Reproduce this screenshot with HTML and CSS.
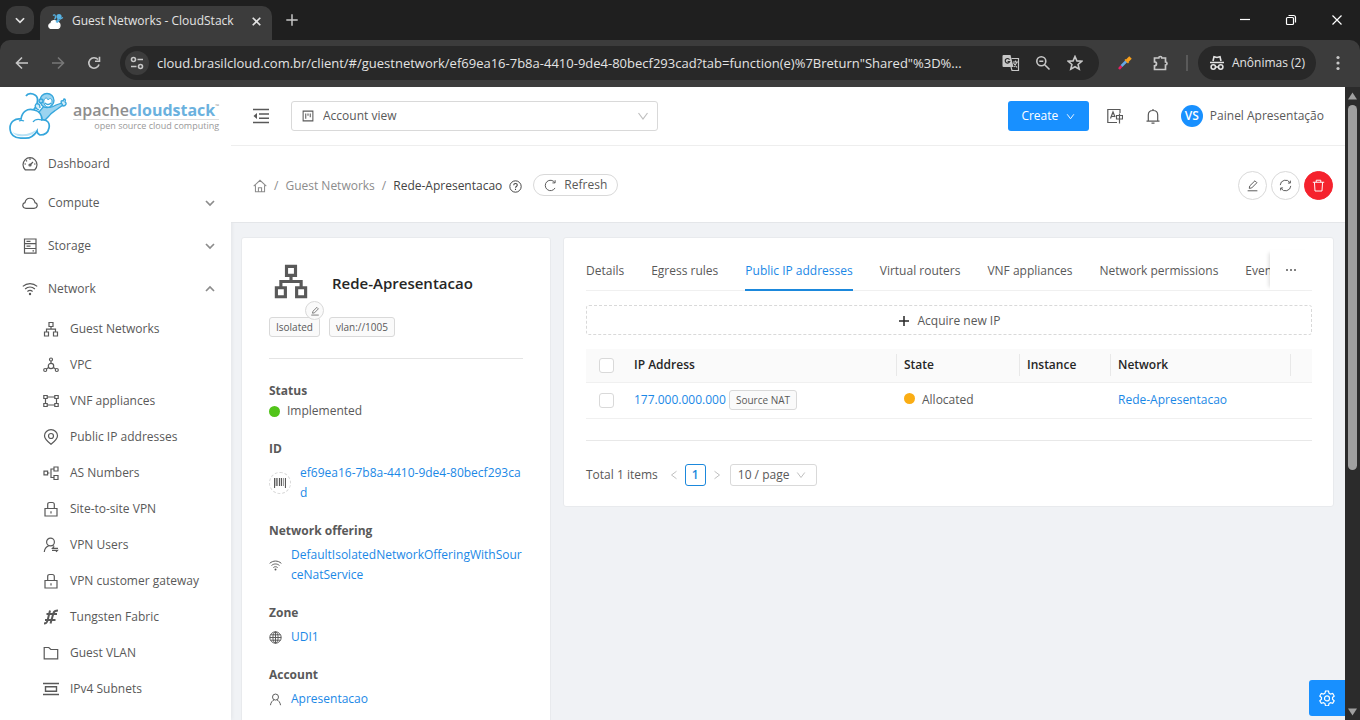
FILE: index.html
```html
<!DOCTYPE html>
<html lang="en">
<head>
    <meta charset="UTF-8">
    <meta name="viewport" content="width=device-width, initial-scale=1.0">
    <title>Guest Networks - CloudStack</title>
    <link rel="stylesheet" href="styles.css">
</head>
<body>
    <!-- shared icons -->
    <svg class="defs" aria-hidden="true">
        <symbol id="i-sitemap" viewBox="0 0 16 16"><path d="M6 1.500h4v4H6zM1.500 11h4v4h-4zM10.500 11h4v4h-4zM8 5.500v2.700M3.500 11V8.200h9V11"/></symbol>
        <symbol id="i-down" viewBox="0 0 12 12"><path d="M1.500 3L6 9l4.500-6"/></symbol>
        <symbol id="i-chev" viewBox="0 0 12 12"><path d="M2 4L6 8l4-4" stroke-width="1.700"/></symbol>
        <symbol id="i-edit" viewBox="0 0 16 16"><path d="M2 14.500h12M4 11.500l.6-3L11 2.200l2.400 2.400L7 11z"/></symbol>
        <symbol id="i-wifi" viewBox="0 0 16 16"><path d="M.8 5.400c4.200-3.800 10.200-3.800 14.400 0M3.100 8c2.900-2.500 6.900-2.500 9.800 0M5.400 10.500c1.600-1.300 3.600-1.300 5.200 0"/><circle cx="8" cy="13" r="1.200" fill="currentColor" stroke="none"/></symbol>
        <symbol id="i-lock" viewBox="0 0 16 16"><path d="M2 7.500h12v7.500H2zM4.700 7.500V3.500q0-2 2-2h2.600q2 0 2 2v4M8 10.200v2.300"/></symbol>
        <symbol id="i-user" viewBox="0 0 16 16"><circle cx="8" cy="5" r="3.700"/><path d="M1.800 15c.4-3.500 2.500-5.800 4.500-6.600M14.200 15c-.4-3.500-2.500-5.800-4.500-6.600"/></symbol>
    </svg>

    <div class="browser">
        <div class="tabstrip">
            <button class="tab-search" aria-label="Search tabs"><svg viewBox="0 0 12 12"><path d="M2.500 4.500L6 8l3.500-3.500" stroke-width="1.500"/></svg></button>
            <div class="tab">
                <svg class="favicon" viewBox="0 0 16 16">
                    <path d="M3.500 15.500C0 15.500 0 11 3 10.500c0-3.500 5-4 6-1 4-.5 4 6 0 6z" fill="#fff" stroke="#fff"/>
                    <path d="M7.500 9L10 5.500l2 2L9.500 10z" fill="#58b4e5" stroke="none"/>
                    <circle cx="11" cy="3.500" r="2.600" fill="#58b4e5" stroke="none"/>
                    <path d="M11.500 6.500l3.500-2M5 2.500c2-2 3.500 1 1.500 4" stroke="#58b4e5"/>
                </svg>
                <span>Guest Networks - CloudStack</span>
                <button class="tab-close" aria-label="Close tab"><svg viewBox="0 0 12 12"><path d="M2.500 2.500l7 7M9.500 2.500l-7 7" stroke-width="1.500"/></svg></button>
            </div>
            <button class="tab-new" aria-label="New tab"><svg viewBox="0 0 14 14"><path d="M7 2v10M2 7h10" stroke-width="1.300"/></svg></button>
            <div class="window-controls">
                <button aria-label="Minimize"><svg viewBox="0 0 12 12"><path d="M1 5.500h10"/></svg></button>
                <button aria-label="Restore"><svg viewBox="0 0 12 12"><rect x="1.500" y="3.500" width="7" height="7" rx="1"/><path d="M3.500 1.500h5q2 0 2 2v5"/></svg></button>
                <button aria-label="Close"><svg viewBox="0 0 12 12"><path d="M1.500 1.500l9 9M10.500 1.500l-9 9"/></svg></button>
            </div>
        </div>
        <div class="toolbar">
            <button aria-label="Back"><svg viewBox="0 0 16 16"><path d="M14 8H2.500M8 2.500L2.500 8 8 13.500"/></svg></button>
            <button class="off" aria-label="Forward"><svg viewBox="0 0 16 16"><path d="M2 8h11.500M8 2.500L13.500 8 8 13.500"/></svg></button>
            <button aria-label="Reload"><svg viewBox="0 0 16 16"><path d="M13 9.500A5.200 5.200 0 1 1 12 4.600M13.500 1.800v4.400H9"/></svg></button>
            <div class="omnibox">
                <button class="site-info" aria-label="Site information"><svg viewBox="0 0 16 16"><circle cx="4.500" cy="4.500" r="2"/><circle cx="11.500" cy="11.500" r="2"/><path d="M8.500 4.500H14M2 11.500h5.500"/></svg></button>
                <input class="url" type="text" aria-label="Address" value="cloud.brasilcloud.com.br/client/#/guestnetwork/ef69ea16-7b8a-4410-9de4-80becf293cad?tab=function(e)%7Breturn&quot;Shared&quot;%3D%...">
                <button aria-label="Translate"><svg class="gt" viewBox="0 0 18 18"><path d="M1.500 1h7l3 12h-10q-1 0-1-1V2q0-1 1-1z" fill="#c7c7c7" stroke="none"/><path d="M9.500 4.500h7v12H10l-1-3.500M11 8h5M13.500 6.500V8M12 13l3-5M11.500 9l3.500 4.500"/><path d="M7.500 5.600a2.300 2.300 0 1 0 .2 2H5.600" stroke="#282828"/></svg></button>
                <button aria-label="Zoom"><svg viewBox="0 0 16 16"><circle cx="6.300" cy="6.300" r="4.500"/><path d="M9.700 9.700L14.500 14.500M4.300 6.300h4"/></svg></button>
                <button aria-label="Bookmark"><svg viewBox="0 0 16 16"><path d="M8 1.500l1.900 4.400 4.800.4-3.600 3.200 1.100 4.700L8 11.700l-4.200 2.500 1.100-4.700L1.300 6.300l4.800-.4z"/></svg></button>
            </div>
            <button class="ext" aria-label="Color picker"><svg viewBox="0 0 16 16"><path d="M2 14l2.500-3" stroke="#e91e63" stroke-width="2.500"/><path d="M4.500 11l5-5" stroke="#64a8e8" stroke-width="2.500"/><path d="M8 4.500L11.500 8" stroke="#f9a01b" stroke-width="1.500"/><path d="M10 6l3.500-3.500" stroke="#f9a01b" stroke-width="3.500"/></svg></button>
            <button class="ext" aria-label="Extensions"><svg viewBox="0 0 16 16"><path d="M1.500 3h4.300a1.500 1.500 0 0 1 3 0h3.700v4a1.500 1.500 0 0 1 0 3v4.500h-11v-3.700a2 2 0 0 0 0-4z" stroke-width="1.700"/></svg></button>
            <span class="sep"></span>
            <button class="incognito"><svg viewBox="0 0 16 16"><path d="M4 6l1-4.200 3 .7 3-.7L12 6M1 7.500h14M6.500 12h3" stroke-width="1.600"/><circle cx="4.300" cy="12" r="2.200"/><circle cx="11.700" cy="12" r="2.200"/></svg>Anônimas (2)</button>
            <button aria-label="Menu"><svg viewBox="0 0 16 16"><g fill="currentColor" stroke="none"><circle cx="8" cy="2.500" r="1.600"/><circle cx="8" cy="8" r="1.600"/><circle cx="8" cy="13.500" r="1.600"/></g></svg></button>
        </div>
    </div>

    <div class="page">
        <aside class="sidebar">
            <div class="logo">
                <svg class="monkey" viewBox="0 0 58 48">
                    <g stroke="#35a6dc" stroke-width="1.300">
                        <path d="M23 20c5-5 8-14 3-17-3-2-7-2-9 1" stroke-width="1.800"/>
                        <path d="M30 20l5-6c4 2 9 1 12-1l6-2 1 2-7 5c-3 2-5 3-7 6l-6 6z" fill="#9bd4f0"/>
                        <path d="M30 18c-3-1-5-4-3-6 3-1 4 1 4 4" fill="#d3edf9"/>
                        <circle cx="38" cy="8.500" r="7" fill="#9bd4f0"/>
                        <circle cx="32" cy="9" r="2" fill="#9bd4f0"/>
                        <path d="M35 8c1-3 4-2 4 0 1-2 4-2 4 1 0 4-2 6-4 6s-5-3-4-7z" fill="#fff" stroke-width="1"/>
                        <path d="M36 11c2 2 4 2 6 0" />
                        <path d="M53 12c-2-3 0-4 1-3l1-2q2 0 1 3c2 1 1 4-2 4z" fill="#d3edf9"/>
                        <path d="M14 46C5 47 1 42 1 36s5-10 11-9c1-7 6-11 13-9 6 1 8 6 8 10 6-1 8 4 7 8-1 5-5 7-9 7-2-1-3-2-3-4-3 5-8 8-14 7z" fill="#fff" stroke-width="1.700"/>
                        <path d="M3 39c2 4 6 6 12 5 6 0 10-2 12-6-5 3-10 5-16 4-4 0-7-1-8-3z" fill="#b9e2f5" stroke="none"/>
                        <path d="M24 30c2-3 6-3 9-2M15 29c-2-1-3-1-5 0"/>
                    </g>
                </svg>
                <div class="wordmark">
                    <div class="brand">apache<b>cloudstack</b><small>™</small></div>
                    <div class="tagline">open source cloud computing</div>
                </div>
            </div>
            <ul class="menu">
                <li><a class="item" href="#"><svg viewBox="0 0 16 16"><path d="M3.200 13.800a7 7 0 1 1 9.600 0zM8 9l3-3M8 2.500V4M2.500 8H4M12 8h1.500M4 4.300l1 1"/><circle cx="8" cy="9" r="1"/></svg><span>Dashboard</span></a></li>
                <li class="group"><a class="item" href="#"><svg viewBox="0 0 16 16"><path d="M4 13.300C0 13.300-.2 8.500 3 7.700 4 1.800 11.800 1.700 13 7.700c3.200.8 3 5.600-1 5.600z"/></svg><span>Compute</span><svg class="arrow"><use href="#i-chev"/></svg></a></li>
                <li class="group"><a class="item" href="#"><svg viewBox="0 0 16 16"><path d="M2.500 1h11.500v14.200H2.500zM2.500 5.700H14M2.500 10.500H14M4.500 3.400h4M4.500 8.100h4M10.500 12.800h1.500"/></svg><span>Storage</span><svg class="arrow"><use href="#i-chev"/></svg></a></li>
                <li class="group open"><a class="item" href="#"><svg><use href="#i-wifi"/></svg><span>Network</span><svg class="arrow"><use href="#i-chev"/></svg></a>
                    <ul class="submenu">
                        <li><a class="item" href="#"><svg><use href="#i-sitemap"/></svg><span>Guest Networks</span></a></li>
                        <li><a class="item" href="#"><svg viewBox="0 0 16 16"><circle cx="8" cy="2.500" r="1.500"/><circle cx="8" cy="9" r="2.700"/><circle cx="2.200" cy="13" r="1.500"/><circle cx="13.800" cy="13" r="1.500"/><path d="M8 4v2.300M5.600 10.500l-2.200 1.600M10.400 10.500l2.200 1.600"/></svg><span>VPC</span></a></li>
                        <li><a class="item" href="#"><svg viewBox="0 0 16 16"><path d="M.8 2.500h3.400v3H.8zM11.800 2.500h3.400v3h-3.400zM.8 10.500h3.400v3H.8zM11.800 10.500h3.400v3h-3.400zM4.200 4h7.600M4.200 12h7.600M2.500 5.500v5M13.500 5.500v5"/></svg><span>VNF appliances</span></a></li>
                        <li><a class="item" href="#"><svg viewBox="0 0 16 16"><path d="M8 15.300C4.500 12.500 1.500 10 1.500 6.700a6.500 6 0 0 1 13 0c0 3.300-3 5.800-6.500 8.600z"/><circle cx="8" cy="7" r="2.500"/></svg><span>Public IP addresses</span></a></li>
                        <li><a class="item" href="#"><svg viewBox="0 0 16 16"><path d="M1 6.200h3.600v3.600H1zM11 2h4v4h-4zM11 10.500h4v4h-4zM11 4H8v8.500h3M4.600 8h1.800"/></svg><span>AS Numbers</span></a></li>
                        <li><a class="item" href="#"><svg><use href="#i-lock"/></svg><span>Site-to-site VPN</span></a></li>
                        <li><a class="item" href="#"><svg viewBox="0 0 16 16"><circle cx="7.500" cy="5" r="3.900"/><path d="M1.300 15c.2-3 2-5.400 4.500-6.300M9.500 8.500l1.800 1M15 11.300H9.500l1.500-1.600M9 13.300h5.500l-1.500 1.600"/></svg><span>VPN Users</span></a></li>
                        <li><a class="item" href="#"><svg><use href="#i-lock"/></svg><span>VPN customer gateway</span></a></li>
                        <li><a class="item" href="#"><svg viewBox="0 0 16 16"><path d="M1 14.500c2.500 0 3-.8 3.700-3.500L7 1.500M7.500 14.500l3-10.500c.5-1.700 1.800-2.500 4.500-2.500M3.500 5h10.500M2 11h10.500" stroke-width="2"/></svg><span>Tungsten Fabric</span></a></li>
                        <li><a class="item" href="#"><svg viewBox="0 0 16 16"><path d="M1.200 2.500h4.600l2 2h6.900v9.300H1.200z"/></svg><span>Guest VLAN</span></a></li>
                        <li><a class="item" href="#"><svg viewBox="0 0 16 16"><path d="M0 2.500h16M0 13.500h16M2.500 5.800h11v4.400h-11z" stroke-width="1.400"/></svg><span>IPv4 Subnets</span></a></li>
                    </ul>
                </li>
            </ul>
        </aside>

        <div class="main">
            <header class="header">
                <button class="fold" aria-label="Collapse menu"><svg viewBox="0 0 16 16"><path d="M0 1.500h16M6 6h10M6 10.200h10M0 14.500h16" stroke-width="1.400"/><path d="M4 5v6L.5 8z" fill="currentColor" stroke="none"/></svg></button>
                <div class="project-select">
                    <svg viewBox="0 0 16 16"><path d="M1.500 1.500h13v13h-13zM5 4.500v7M8 4.500v3M11 4.500v5" stroke-width="1.400"/></svg>
                    <select aria-label="Project"><option>Account view</option></select>
                    <svg class="caret"><use href="#i-down"/></svg>
                </div>
                <button class="btn-create">Create<svg><use href="#i-down"/></svg></button>
                <button class="icon-btn" aria-label="Language"><svg viewBox="0 0 16 16"><path d="M13 5V1.500H.8v13H10M3.500 10.500L6 4l2 5M4.500 8.500h3M9.500 7.500h6v3.500h-6zM12.500 5.500v10" stroke-width="1.200"/></svg></button>
                <button class="icon-btn bell" aria-label="Notifications"><svg viewBox="0 0 16 16"><path d="M1.500 13.200h13M3.300 13V7q0-4.500 4.700-4.500T12.700 7v6M8 1v1.500M6.500 15.200h3"/></svg></button>
                <a class="account" href="#"><span class="avatar">VS</span>Painel Apresentação</a>
            </header>

            <div class="crumb-bar">
                <nav class="crumbs">
                    <a href="#" aria-label="Home"><svg viewBox="0 0 16 16"><path d="M.8 8.200L8 1.500l7.200 6.700M2.800 7v7.500h10.400V7M6.200 14.500V10h3.600v4.500"/></svg></a>
                    <i>/</i><a href="#">Guest Networks</a><i>/</i><span class="current">Rede-Apresentacao</span>
                    <svg class="help" viewBox="0 0 16 16"><circle cx="8" cy="8" r="7"/><path d="M5.800 6.500c0-3 4.400-2.800 4.400-.2 0 1.700-2.200 1.600-2.200 3.200M8 10.700v1.500" stroke-width="1.300"/></svg>
                </nav>
                <button class="btn-refresh"><svg viewBox="0 0 16 16"><path d="M13.600 11A6.400 6.400 0 1 1 13.300 4.400M13.700 1.500v3.300h-3.300"/></svg>Refresh</button>
                <div class="actions">
                    <button aria-label="Edit"><svg><use href="#i-edit"/></svg></button>
                    <button aria-label="Restart"><svg viewBox="0 0 16 16"><path d="M1.500 7.500A6.500 6.500 0 0 1 13.500 4.500M14.500 8.500A6.500 6.500 0 0 1 2.500 11.500M14 2v3h-3M2 14v-3h3"/></svg></button>
                    <button class="danger" aria-label="Delete"><svg viewBox="0 0 16 16"><path d="M1 4h14M3 4l.7 10.800h8.600L13 4M5.200 4V1.500h5.600V4"/></svg></button>
                </div>
            </div>

            <div class="content">
                <section class="card info">
                    <div class="resource">
                        <div class="resource-icon">
                            <svg><use href="#i-sitemap"/></svg>
                            <button class="badge-edit" aria-label="Edit icon"><svg><use href="#i-edit"/></svg></button>
                        </div>
                        <h1>Rede-Apresentacao</h1>
                    </div>
                    <div class="tags"><span class="tag">Isolated</span><span class="tag">vlan://1005</span></div>
                    <dl>
                        <div class="status"><dt>Status</dt><dd><span class="dot green"></span>Implemented</dd></div>
                        <div><dt>ID</dt><dd><button class="barcode" aria-label="Copy ID"><svg viewBox="0 0 12 10"><path d="M.5 0v10M3 0v8M5.500 0v8M7.500 0v8M11.500 0v10" /><path d="M9.500 0v8M2 0v8" stroke-width=".6"/></svg></button><a href="#">ef69ea16-7b8a-4410-9de4-80becf293cad</a></dd></div>
                        <div><dt>Network offering</dt><dd><svg><use href="#i-wifi"/></svg><a href="#">DefaultIsolatedNetworkOfferingWithSourceNatService</a></dd></div>
                        <div><dt>Zone</dt><dd><svg viewBox="0 0 16 16"><circle cx="8" cy="8" r="7"/><ellipse cx="8" cy="8" rx="3.200" ry="7"/><path d="M8 1v14M1 8h14M2 4.700h12M2 11.300h12"/></svg><a href="#">UDI1</a></dd></div>
                        <div><dt>Account</dt><dd><svg><use href="#i-user"/></svg><a href="#">Apresentacao</a></dd></div>
                    </dl>
                </section>

                <section class="card detail">
                    <div class="tabs">
                        <div class="tab-list" role="tablist">
                            <button role="tab">Details</button>
                            <button role="tab">Egress rules</button>
                            <button role="tab" class="active" aria-selected="true">Public IP addresses</button>
                            <button role="tab">Virtual routers</button>
                            <button role="tab">VNF appliances</button>
                            <button role="tab">Network permissions</button>
                            <button role="tab">Events</button>
                        </div>
                        <button class="more" aria-label="More tabs"><svg viewBox="0 0 12 12"><g fill="currentColor" stroke="none"><circle cx="2" cy="6" r="1"/><circle cx="6" cy="6" r="1"/><circle cx="10" cy="6" r="1"/></g></svg></button>
                    </div>
                    <button class="btn-acquire"><svg viewBox="0 0 12 12"><path d="M6 1v10M1 6h10" stroke-width="1.500"/></svg>Acquire new IP</button>
                    <table>
                        <colgroup><col class="c-check"><col><col class="c-state"><col class="c-instance"><col class="c-network"><col class="c-end"></colgroup>
                        <thead>
                            <tr><th><input type="checkbox" aria-label="Select all"></th><th class="split">IP Address</th><th class="split">State</th><th class="split">Instance</th><th class="split">Network</th><th></th></tr>
                        </thead>
                        <tbody>
                            <tr><td><input type="checkbox" aria-label="Select 177.000.000.000"></td><td><a href="#">177.000.000.000</a> <span class="tag">Source NAT</span></td><td><span class="dot orange"></span>Allocated</td><td></td><td><a href="#">Rede-Apresentacao</a></td><td></td></tr>
                        </tbody>
                    </table>
                    <div class="pagination">
                        <span>Total 1 items</span>
                        <button class="prev" aria-label="Previous page"><svg><use href="#i-down"/></svg></button>
                        <button class="num">1</button>
                        <button class="next" aria-label="Next page"><svg><use href="#i-down"/></svg></button>
                        <div class="page-size"><select aria-label="Page size"><option>10 / page</option></select><svg><use href="#i-down"/></svg></div>
                    </div>
                </section>
            </div>
            <button class="settings" aria-label="Settings"><svg viewBox="0 0 16 16"><path d="M6.500 1h3l.5 2.200 1.500.9 2.200-.7 1.500 2.600-1.700 1.500v1.800l1.700 1.500-1.500 2.600-2.200-.7-1.500.9-.5 2.200h-3L6 13.600l-1.500-.9-2.200.7L.8 10.800l1.700-1.500V7.500L.8 6l1.500-2.600 2.200.7L6 3.200z" stroke-width="1.200"/><circle cx="8" cy="8.400" r="2.500" stroke-width="1.200"/></svg></button>
        </div>

        <div class="scrollbar">
            <svg viewBox="0 0 10 8"><path d="M5 0l5 8H0z"/></svg>
            <div class="track"><div class="thumb"></div></div>
            <svg viewBox="0 0 10 8"><path d="M0 0h10L5 8z"/></svg>
        </div>
    </div>
</body>
</html>
```
FILE: styles.css
```css
* {
    box-sizing: border-box;
}
body {
    display: flex;
    flex-direction: column;
    height: 100vh;
    margin: 0;
    overflow: hidden;
    background: #f0f2f5;
    color: #595959;
    font: 12px/20px "Open Sans", "Noto Sans", sans-serif;
}
button, input, select {
    margin: 0;
    padding: 0;
    border: 0;
    background: none;
    color: inherit;
    font: inherit;
}
button {
    display: flex;
    align-items: center;
    justify-content: center;
    cursor: pointer;
}
select {
    appearance: none;
    outline: none;
}
a {
    color: #1b88e6;
    text-decoration: none;
}
ul, dl, dd {
    margin: 0;
    padding: 0;
    list-style: none;
}
svg {
    flex: none;
    width: 16px;
    height: 16px;
    fill: none;
    stroke: currentColor;
    stroke-width: 1.2;
}
.defs {
    position: absolute;
    width: 0;
    height: 0;
}

/* browser window */
.browser {
    flex: none;
    background: #1f1f1f;
    color: #e3e3e3;
}
.tabstrip {
    display: flex;
    align-items: center;
    height: 40px;
    padding-left: 6px;
}
.tab-search {
    width: 28px;
    height: 28px;
    border-radius: 10px;
    background: #3a3a3a;
}
.tab-search svg {
    width: 14px;
    height: 14px;
}
.tab {
    display: flex;
    align-items: center;
    align-self: flex-end;
    gap: 8px;
    width: 232px;
    height: 34px;
    margin-left: 6px;
    padding: 0 8px 4px;
    border-radius: 10px 10px 0 0;
    background: #3c3c3c;
    white-space: nowrap;
}
.tab span {
    flex: 1;
}
.tab-close {
    width: 16px;
    height: 16px;
}
.tab-close svg {
    width: 13px;
    height: 13px;
}
.tab-new {
    width: 28px;
    height: 28px;
    margin-left: 6px;
    color: #c7c7c7;
}
.window-controls {
    display: flex;
    margin-left: auto;
    color: #fff;
}
.window-controls button {
    width: 46px;
    height: 40px;
}
.window-controls svg {
    width: 12px;
    height: 12px;
}
.toolbar {
    display: flex;
    align-items: center;
    height: 47px;
    padding: 0 4px 1px;
    border-radius: 10px 10px 0 0;
    background: #3c3c3c;
    color: #c7c7c7;
}
.toolbar svg {
    stroke-width: 1.6;
}
.toolbar button {
    flex: none;
    width: 36px;
    height: 28px;
}
.toolbar .off {
    color: #777;
}
.omnibox {
    display: flex;
    flex: 1;
    align-items: center;
    height: 34px;
    margin: 0 8px;
    padding: 0 8px 0 5px;
    border-radius: 17px;
    background: #282828;
}
.omnibox button {
    width: 32px;
}
.omnibox .site-info {
    width: 24px;
    height: 24px;
    border-radius: 50%;
    background: #3c3c3c;
}
.omnibox .gt {
    width: 18px;
    height: 18px;
    stroke-width: 1.2;
}
.url {
    flex: 1;
    min-width: 0;
    margin-left: 8px;
    color: #e3e3e3;
    font-size: 13px;
}
.sep {
    width: 2px;
    height: 16px;
    margin: 0 10px 0 7px;
    background: #5a5a5a;
}
.toolbar .incognito {
    gap: 7px;
    width: auto;
    height: 34px;
    margin-right: 4px;
    padding: 0 11px;
    border-radius: 17px;
    background: #282828;
    color: #e3e3e3;
}

.page {
    display: flex;
    flex: 1;
    min-height: 0;
}

/* sidebar */
.sidebar {
    flex: none;
    width: 231px;
    overflow: hidden;
    background: #fff;
    box-shadow: 1px 0 4px rgba(0, 0, 0, 0.06);
}
.logo {
    display: flex;
    gap: 6px;
    height: 59px;
    padding: 5px 0 0 9px;
}
.monkey {
    width: 58px;
    height: 48px;
}
.wordmark {
    padding-top: 8px;
}
.brand {
    display: flex;
    height: 20px;
    border-bottom: 1px solid #ddd;
    color: #8e8e8e;
    font-size: 16px;
    font-weight: 600;
    line-height: 20px;
}
.brand b {
    color: #6bb1de;
    font-weight: 700;
}
.brand small {
    font-size: 5px;
    line-height: 12px;
}
.tagline {
    color: #999;
    font-size: 9px;
    line-height: 12px;
    text-align: right;
}
.item {
    display: flex;
    align-items: center;
    gap: 10px;
    height: 36px;
    padding: 0 15px 0 22px;
    color: #595959;
    font-size: 12px;
}
.item span {
    flex: 1;
}
.menu .arrow {
    width: 12px;
    height: 12px;
    color: #8c8c8c;
}
.menu > li {
    margin-bottom: 3px;
}
.menu > .group {
    margin-bottom: 7px;
}
.open > .item .arrow {
    transform: rotate(180deg);
}
.submenu {
    margin-top: 4px;
}
.submenu .item {
    gap: 11px;
    padding-left: 43px;
}

/* header */
.main {
    position: relative;
    display: flex;
    flex: 1;
    flex-direction: column;
    min-width: 0;
}
.header {
    display: flex;
    flex: none;
    align-items: center;
    height: 59px;
    border-bottom: 1px solid #eee;
    padding: 0 21px 0 22px;
    background: #fff;
}
.project-select {
    display: flex;
    flex: 0 1 367px;
    align-items: center;
    gap: 9px;
    height: 30px;
    margin: 0 auto 0 22px;
    padding: 0 8px 0 10px;
    border: 1px solid #d9d9d9;
    border-radius: 3px;
}
.project-select svg {
    width: 12px;
    height: 12px;
}
.project-select select {
    flex: 1;
}
.project-select .caret, .page-size svg {
    color: #bfbfbf;
}
.btn-create {
    gap: 8px;
    width: 81px;
    height: 30px;
    border-radius: 3px;
    background: #1890ff;
    color: #fff;
}
.btn-create svg {
    width: 9px;
    height: 9px;
}
.icon-btn {
    margin-left: 18px;
}
.bell {
    margin-left: 22px;
}
.account {
    display: flex;
    align-items: center;
    gap: 7px;
    margin-left: 20px;
    color: #595959;
}
.avatar {
    width: 22px;
    height: 22px;
    border-radius: 50%;
    background: #1890ff;
    color: #fff;
    font-weight: 600;
    line-height: 22px;
    text-align: center;
}
.crumb-bar {
    display: flex;
    flex: none;
    align-items: center;
    height: 77px;
    padding: 2px 12px 0 22px;
    border-bottom: 1px solid #e4e6e9;
    background: #fff;
}
.crumbs {
    display: flex;
    align-items: center;
    gap: 7px;
    padding-top: 2px;
    color: #8c8c8c;
}
.crumbs a {
    display: flex;
    color: #8c8c8c;
}
.crumbs i {
    font-style: normal;
}
.crumbs svg {
    width: 14px;
    height: 14px;
}
.crumbs .current, .crumbs .help {
    color: #434343;
}
.crumbs .help {
    width: 13px;
    height: 13px;
}
.btn-refresh {
    gap: 7px;
    width: 85px;
    height: 22px;
    margin-left: 11px;
    border: 1px solid #d9d9d9;
    border-radius: 11px;
}
.btn-refresh svg {
    width: 13px;
    height: 13px;
}
.actions {
    display: flex;
    gap: 4px;
    margin-left: auto;
}
.actions button {
    width: 29px;
    height: 29px;
    border: 1px solid #d9d9d9;
    border-radius: 50%;
}
.actions svg {
    width: 13px;
    height: 13px;
}
.actions .danger {
    border-color: #f5222d;
    background: #f5222d;
    color: #fff;
}

/* cards */
.content {
    display: flex;
    flex: 1;
    align-items: flex-start;
    gap: 12px;
    min-height: 0;
    padding: 14px 11px 0 10px;
    overflow: hidden;
}
.card {
    border: 1px solid #e8eaed;
    border-radius: 3px;
    background: #fff;
}
.info {
    flex: 0 0 310px;
    padding: 22px 27px 27px;
}
.resource {
    display: flex;
    align-items: center;
    gap: 18px;
    height: 46px;
}
.resource-icon {
    position: relative;
    width: 45px;
    height: 46px;
    padding: 3px 4px;
}
.resource-icon > svg {
    width: 36px;
    height: 36px;
    stroke-width: 1.4;
}
.badge-edit {
    position: absolute;
    right: -10px;
    bottom: -14px;
    width: 19px;
    height: 19px;
    border: 1px solid #d9d9d9;
    border-radius: 50%;
    background: #fafafa;
}
.badge-edit svg {
    width: 10px;
    height: 10px;
}
h1 {
    margin: 0;
    color: #262626;
    font-size: 15px;
    font-weight: 600;
}
.tags {
    display: flex;
    gap: 9px;
    margin-top: 11px;
    padding-bottom: 21px;
    border-bottom: 1px solid #e4e4e4;
}
.tag {
    display: inline-block;
    padding: 0 6px;
    border: 1px solid #d9d9d9;
    border-radius: 3px;
    background: #fafafa;
    font-size: 10px;
    line-height: 18px;
}
dl {
    display: flex;
    flex-direction: column;
    gap: 18px;
    margin-top: 22px;
}
dt {
    font-weight: 700;
}
dd {
    display: flex;
    align-items: center;
    gap: 9px;
    margin-top: 4px;
}
dd svg {
    width: 13px;
    height: 13px;
}
dd a {
    word-break: break-all;
}
.status dd {
    gap: 0;
    margin-top: 0;
}
.dot {
    display: inline-block;
    width: 11px;
    height: 11px;
    margin-right: 7px;
    border-radius: 50%;
}
.green {
    background: #52c41a;
}
.orange {
    background: #faad14;
}
.barcode {
    flex: none;
    width: 22px;
    height: 22px;
    border: 1px dashed #d9d9d9;
    border-radius: 50%;
}
.barcode svg {
    width: 12px;
    height: 10px;
}

/* detail tabs */
.detail {
    flex: 1;
    min-width: 0;
    padding: 12px 21px 20px 22px;
}
.tabs {
    display: flex;
    height: 41px;
    border-bottom: 1px solid #f0f0f0;
}
.tab-list {
    display: flex;
    flex: 1;
    gap: 27px;
    height: 41px;
    min-width: 0;
    overflow: hidden;
    white-space: nowrap;
}
.tab-list button {
    flex: none;
    padding-top: 2px;
    border-bottom: 2px solid transparent;
}
.tab-list .active {
    border-color: #1b88dc;
    color: #1b88e6;
    font-weight: 500;
}
.more {
    width: 42px;
    box-shadow: -4px 0 4px -3px rgba(0, 0, 0, 0.15);
}
.more svg {
    width: 12px;
    height: 12px;
}
.btn-acquire {
    gap: 8px;
    width: 100%;
    height: 30px;
    margin: 14px 0;
    padding-top: 1px;
    border: 1px dashed #d9d9d9;
    border-radius: 3px;
}
.btn-acquire svg {
    width: 12px;
    height: 12px;
    color: #262626;
}
table {
    width: 100%;
    border-collapse: collapse;
    table-layout: fixed;
}
.c-check {
    width: 41px;
}
.c-state {
    width: 123px;
}
.c-instance {
    width: 91px;
}
.c-network {
    width: 180px;
}
.c-end {
    width: 21px;
}
th, td {
    height: 36px;
    padding: 0 7px;
    border-bottom: 1px solid #f0f0f0;
    text-align: left;
    white-space: nowrap;
}
th {
    height: 33px;
    background: #fafafa;
    color: #262626;
    font-weight: 600;
}
.split {
    background: linear-gradient(#e8e8e8, #e8e8e8) right center / 1px 22px no-repeat #fafafa;
}
th:first-child, td:first-child {
    padding-left: 13px;
}
input[type="checkbox"] {
    display: block;
    appearance: none;
    width: 15px;
    height: 15px;
    border: 1px solid #d9d9d9;
    border-radius: 3px;
    background: #fff;
}
.pagination {
    display: flex;
    align-items: center;
    margin-top: 21px;
    padding-top: 23px;
    border-top: 1px solid #e8e8e8;
}
.pagination svg {
    width: 10px;
    height: 10px;
}
.prev, .next {
    width: 22px;
    color: #bfbfbf;
}
.prev {
    margin-left: 5px;
}
.prev svg {
    transform: rotate(90deg);
}
.next svg {
    transform: rotate(-90deg);
}
.num {
    width: 21px;
    height: 22px;
    border: 1px solid #1b88dc;
    border-radius: 3px;
    color: #1b88dc;
    font-weight: 600;
}
.page-size {
    display: flex;
    align-items: center;
    gap: 6px;
    height: 22px;
    margin-left: 2px;
    padding: 0 10px 0 7px;
    border: 1px solid #d9d9d9;
    border-radius: 3px;
}
.settings {
    position: absolute;
    right: 0;
    bottom: 4px;
    width: 36px;
    height: 36px;
    border-radius: 3px 0 0 3px;
    background: #1890ff;
    color: #fff;
}

/* scrollbar */
.scrollbar {
    display: flex;
    flex: none;
    flex-direction: column;
    align-items: center;
    gap: 5px;
    width: 15px;
    padding: 5px 0 4px;
    background: #2b2b2b;
}
.scrollbar svg {
    width: 9px;
    height: 8px;
    fill: #9f9f9f;
    stroke: none;
}
.track {
    flex: 1;
    width: 9px;
}
.thumb {
    height: 61%;
    border-radius: 5px;
    background: #9f9f9f;
}
```
